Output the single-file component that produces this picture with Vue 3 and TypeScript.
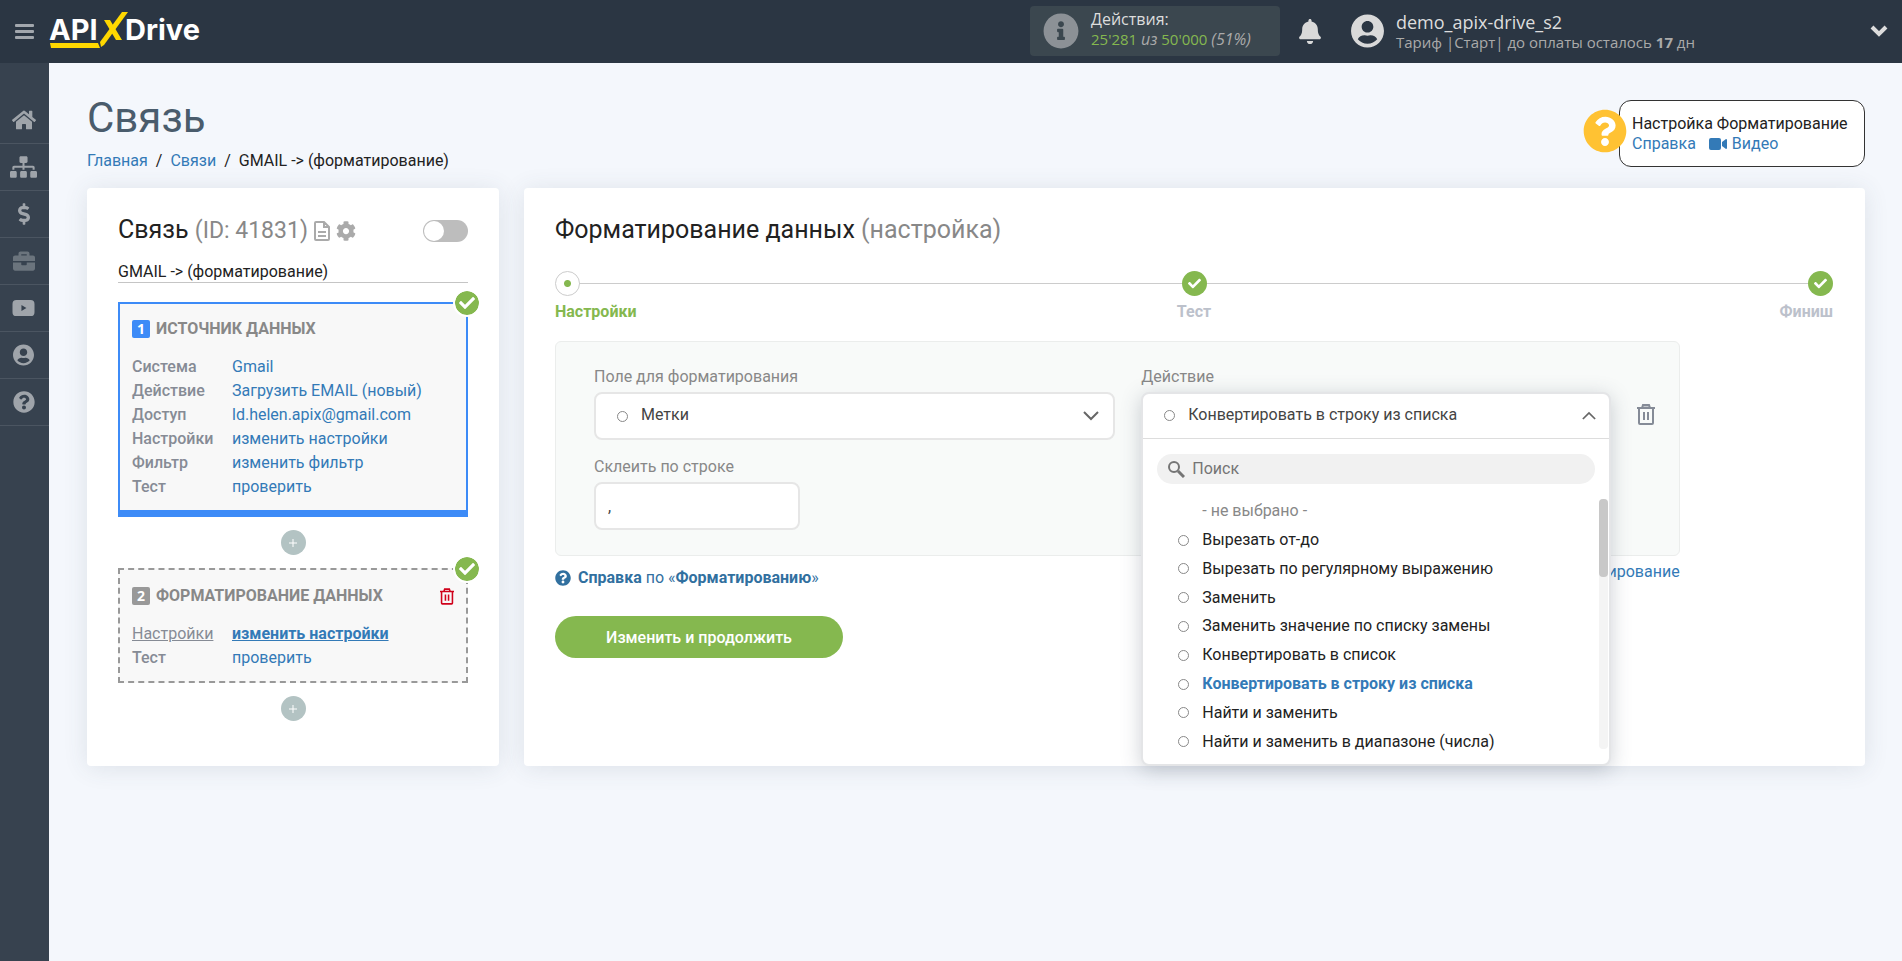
<script setup lang="ts">
import { ref } from 'vue'

interface Icon { w: number; h: number; d: string }
interface Row { label: string; value: string; current?: boolean }

const icons: Record<string, Icon> = {
  home: { w: 576, h: 512, d: 'M280.37 148.26L96 300.11V464a16 16 0 0 0 16 16l112.06-.29a16 16 0 0 0 15.92-16V368a16 16 0 0 1 16-16h64a16 16 0 0 1 16 16v95.64a16 16 0 0 0 16 16.05L464 480a16 16 0 0 0 16-16V300L295.67 148.26a12.19 12.19 0 0 0-15.3 0zM571.6 251.47L488 182.56V44.05a12 12 0 0 0-12-12h-56a12 12 0 0 0-12 12v72.61L318.47 43a48 48 0 0 0-61 0L4.34 251.47a12 12 0 0 0-1.6 16.9l25.5 31A12 12 0 0 0 45.15 301l235.22-193.74a12.19 12.19 0 0 1 15.3 0L530.9 301a12 12 0 0 0 16.9-1.6l25.5-31a12 12 0 0 0-1.7-16.93z' },
  sitemap: { w: 640, h: 512, d: 'M128 352H32c-17.67 0-32 14.33-32 32v96c0 17.67 14.33 32 32 32h96c17.67 0 32-14.33 32-32v-96c0-17.67-14.33-32-32-32zm-24-80h192v48h48v-48h192v48h48v-57.59c0-21.17-17.23-38.41-38.41-38.41H344v-64h40c17.67 0 32-14.33 32-32V32c0-17.67-14.33-32-32-32H256c-17.67 0-32 14.33-32 32v96c0 17.67 14.33 32 32 32h40v64H94.41C73.23 224 56 241.23 56 262.41V320h48v-48zm264 80h-96c-17.67 0-32 14.33-32 32v96c0 17.67 14.33 32 32 32h96c17.67 0 32-14.33 32-32v-96c0-17.67-14.33-32-32-32zm240 0h-96c-17.67 0-32 14.33-32 32v96c0 17.67 14.33 32 32 32h96c17.67 0 32-14.33 32-32v-96c0-17.67-14.33-32-32-32z' },
  dollar: { w: 288, h: 512, d: 'M209.2 233.4l-108-31.6C88.7 198.2 80 186.5 80 173.5c0-16.3 13.2-29.5 29.5-29.5h66.3c12.2 0 24.2 3.7 34.2 10.5 6.1 4.1 14.3 3.1 19.5-2l34.8-34c7.1-6.9 6.1-18.4-1.8-24.5C238 74.8 207.4 64.1 176 64V16c0-8.8-7.2-16-16-16h-32c-8.8 0-16 7.2-16 16v48h-2.5C45.8 64-5.4 118.7.5 183.6c4.2 46.1 39.4 83.6 83.8 96.6l102.5 30c12.5 3.7 21.2 15.3 21.2 28.3 0 16.3-13.2 29.5-29.5 29.5h-66.3C100 368 88 364.3 78 357.5c-6.1-4.1-14.3-3.1-19.5 2l-34.8 34c-7.1 6.9-6.1 18.4 1.8 24.5 24.5 19.2 55.1 29.9 86.5 30v48c0 8.8 7.2 16 16 16h32c8.8 0 16-7.2 16-16v-48.2c46.6-.9 90.3-28.6 105.7-72.7 21.5-61.6-14.6-124.8-72.5-141.7z' },
  briefcase: { w: 512, h: 512, d: 'M320 336c0 8.84-7.16 16-16 16h-96c-8.84 0-16-7.16-16-16v-48H0v144c0 25.6 22.4 48 48 48h416c25.6 0 48-22.4 48-48V288H320v48zm144-208h-80V80c0-25.6-22.4-48-48-48H176c-25.6 0-48 22.4-48 48v48H48c-25.6 0-48 22.4-48 48v80h512v-80c0-25.6-22.4-48-48-48zm-144 0H192V96h128v32z' },
  video: { w: 512, h: 512, d: 'M90 70h332q90 0 90 90v192q0 90-90 90H90q-90 0-90-90V160q0-90 90-90zM208 186v140l116-70z' },
  user: { w: 496, h: 512, d: 'M248 8C111 8 0 119 0 256s111 248 248 248 248-111 248-248S385 8 248 8zm0 96c48.6 0 88 39.4 88 88s-39.4 88-88 88-88-39.4-88-88 39.4-88 88-88zm0 344c-58.7 0-111.3-26.6-146.5-68.2 18.8-35.4 55.6-59.8 98.5-59.8 2.4 0 4.8.4 7.1 1.1 13 4.2 26.6 6.9 40.9 6.9 14.3 0 28-2.7 40.9-6.9 2.3-.7 4.7-1.1 7.1-1.1 42.9 0 79.7 24.4 98.5 59.8C359.3 421.4 306.7 448 248 448z' },
  question: { w: 512, h: 512, d: 'M504 256c0 136.997-111.043 248-248 248S8 392.997 8 256C8 119.083 119.043 8 256 8s248 111.083 248 248zM262.655 90c-54.497 0-89.255 22.957-116.549 63.758-3.536 5.286-2.353 12.415 2.715 16.258l34.699 26.31c5.205 3.947 12.621 3.008 16.665-2.122 17.864-22.658 30.113-35.797 57.303-35.797 20.429 0 45.698 13.148 45.698 32.958 0 14.976-12.363 22.667-32.534 33.976C247.128 238.528 216 254.941 216 296v4c0 6.627 5.373 12 12 12h56c6.627 0 12-5.373 12-12v-1.333c0-28.462 83.186-29.647 83.186-106.667 0-58.002-60.165-102-116.531-102zM256 338c-25.365 0-46 20.635-46 46 0 25.364 20.635 46 46 46s46-20.636 46-46c0-25.365-20.635-46-46-46z' },
  info: { w: 512, h: 512, d: 'M256 8C119.043 8 8 119.083 8 256c0 136.997 111.043 248 248 248s248-111.003 248-248C504 119.083 392.957 8 256 8zm0 110c23.196 0 42 18.804 42 42s-18.804 42-42 42-42-18.804-42-42 18.804-42 42-42zm56 254c0 6.627-5.373 12-12 12h-88c-6.627 0-12-5.373-12-12v-24c0-6.627 5.373-12 12-12h12v-64h-12c-6.627 0-12-5.373-12-12v-24c0-6.627 5.373-12 12-12h64c6.627 0 12 5.373 12 12v100h12c6.627 0 12 5.373 12 12v24z' },
  bell: { w: 448, h: 512, d: 'M224 512c35.32 0 63.97-28.65 63.97-64H160.03c0 35.35 28.65 64 63.97 64zm215.39-149.71c-19.32-20.76-55.47-51.99-55.47-154.29 0-77.7-54.48-139.9-127.94-155.16V32c0-17.67-14.32-32-31.98-32s-31.98 14.33-31.98 32v20.84C118.56 68.1 64.08 130.3 64.08 208c0 102.3-36.15 133.53-55.47 154.29-6 6.45-8.66 14.16-8.61 21.71.11 16.4 12.98 32 32.1 32h383.8c19.12 0 32-15.6 32.1-32 .05-7.55-2.61-15.27-8.61-21.71z' },
  cog: { w: 512, h: 512, d: 'M487.4 315.7l-42.6-24.6c4.3-23.2 4.3-47 0-70.2l42.6-24.6c4.9-2.8 7.1-8.6 5.5-14-11.1-35.6-30-67.8-54.7-94.6-3.8-4.1-10-5.1-14.8-2.3L380.8 110c-17.9-15.4-38.5-27.3-60.8-35.1V25.8c0-5.6-3.9-10.5-9.4-11.7-36.7-8.2-74.3-7.8-109.2 0-5.5 1.2-9.4 6.1-9.4 11.7V75c-22.2 7.9-42.8 19.8-60.8 35.1L88.7 85.5c-4.9-2.8-11-1.9-14.8 2.3-24.7 26.7-43.6 58.9-54.7 94.6-1.7 5.4.6 11.2 5.5 14L67.3 221c-4.3 23.2-4.3 47 0 70.2l-42.6 24.6c-4.9 2.8-7.1 8.6-5.5 14 11.1 35.6 30 67.8 54.7 94.6 3.8 4.1 10 5.1 14.8 2.3l42.6-24.6c17.9 15.4 38.5 27.3 60.8 35.1v49.2c0 5.6 3.9 10.5 9.4 11.7 36.7 8.2 74.3 7.8 109.2 0 5.5-1.2 9.4-6.1 9.4-11.7v-49.2c22.2-7.9 42.8-19.8 60.8-35.1l42.6 24.6c4.9 2.8 11 1.9 14.8-2.3 24.7-26.7 43.6-58.9 54.7-94.6 1.5-5.5-.7-11.3-5.6-14.1zM256 336c-44.1 0-80-35.9-80-80s35.9-80 80-80 80 35.9 80 80-35.9 80-80 80z' },
  check: { w: 512, h: 512, d: 'M173.898 439.404l-166.4-166.4c-9.997-9.997-9.997-26.206 0-36.204l36.203-36.204c9.997-9.998 26.207-9.998 36.204 0L192 312.69 432.095 72.596c9.997-9.997 26.207-9.997 36.204 0l36.203 36.204c9.997 9.997 9.997 26.206 0 36.204l-294.4 294.401c-9.998 9.997-26.207 9.997-36.204-.001z' },
}

const nav = [
  { icon: 'home', label: 'Главная', size: 24 },
  { icon: 'sitemap', label: 'Связи', size: 27 },
  { icon: 'dollar', label: 'Оплата', size: 12 },
  { icon: 'briefcase', label: 'Проекты', size: 22 },
  { icon: 'video', label: 'Видео', size: 23 },
  { icon: 'user', label: 'Профиль', size: 21 },
  { icon: 'question', label: 'Помощь', size: 22 },
]

const sourceRows: Row[] = [
  { label: 'Система', value: 'Gmail' },
  { label: 'Действие', value: 'Загрузить EMAIL (новый)' },
  { label: 'Доступ', value: 'ld.helen.apix@gmail.com' },
  { label: 'Настройки', value: 'изменить настройки' },
  { label: 'Фильтр', value: 'изменить фильтр' },
  { label: 'Тест', value: 'проверить' },
]
const formatRows: Row[] = [
  { label: 'Настройки', value: 'изменить настройки', current: true },
  { label: 'Тест', value: 'проверить' },
]

const actions = [
  'Вырезать от-до',
  'Вырезать по регулярному выражению',
  'Заменить',
  'Заменить значение по списку замены',
  'Конвертировать в список',
  'Конвертировать в строку из списка',
  'Найти и заменить',
  'Найти и заменить в диапазоне (числа)',
]

const enabled = ref(false)
const linkName = ref('GMAIL -> (форматирование)')
const field = ref('Метки')
const glue = ref(',')
const search = ref('')
const open = ref(true)
const action = ref('Конвертировать в строку из списка')
</script>

<template>
  <div class="page">
    <header class="topbar">
      <button class="burger" aria-label="Меню"><i></i><i></i><i></i></button>
      <a class="logo" href="#" aria-label="APIXDrive">
        <svg width="160" height="38" viewBox="0 0 160 38">
          <text x="0" y="28" class="logo-text">API</text>
          <text x="76" y="28" class="logo-text">Drive</text>
          <path d="M1 31h48l2 5H2z" fill="#ffd800" />
          <path d="M73 0h6L55 33l-3 2-1-5z" fill="#ffd800" />
          <path d="M55 8h6l12 20h-6z" fill="#ffd800" />
        </svg>
      </a>
      <a class="quota" href="#">
        <svg class="quota-icon" width="36" height="36" viewBox="0 0 512 512"><path :d="icons.info.d" /></svg>
        <span class="quota-text">
          <span class="quota-title">Действия:</span>
          <span class="quota-value"><b>25'281</b> <i>из</i> <b>50'000</b> <i>(51%)</i></span>
        </span>
      </a>
      <button class="bell" aria-label="Уведомления">
        <svg width="22" height="25" viewBox="0 0 448 512"><path :d="icons.bell.d" /></svg>
      </button>
      <button class="account">
        <svg class="avatar" width="33" height="34" viewBox="0 0 496 512"><path :d="icons.user.d" /></svg>
        <span class="account-text">
          <span class="account-name">demo_apix-drive_s2</span>
          <span class="account-plan">Тариф |Старт| до оплаты осталось <strong>17</strong> дн</span>
        </span>
        <svg class="caret" width="18" height="12" viewBox="0 0 18 12"><path d="M2 2l7 7 7-7" /></svg>
      </button>
    </header>

    <div class="body">
      <nav class="sidebar">
        <a v-for="n in nav" :key="n.icon" href="#" class="nav-item" :class="{ dim: n.icon === 'briefcase' }" :aria-label="n.label">
          <svg :width="n.size" height="22" :viewBox="`0 0 ${icons[n.icon].w} ${icons[n.icon].h}`"><path fill-rule="evenodd" :d="icons[n.icon].d" /></svg>
        </a>
      </nav>

      <main class="main">
        <div class="head">
          <div>
            <h1>Связь</h1>
            <nav class="crumbs">
              <a href="#">Главная</a><span>/</span><a href="#">Связи</a><span>/</span><em>GMAIL -&gt; (форматирование)</em>
            </nav>
          </div>
          <aside class="help">
            <svg class="help-icon" width="44" height="44" viewBox="0 0 512 512"><circle cx="256" cy="256" r="200" fill="#fff" /><path :d="icons.question.d" /></svg>
            <div>Настройка Форматирование</div>
            <div class="help-links">
              <a href="#">Справка</a>
              <a href="#" class="video-link"><svg width="18" height="12" viewBox="0 0 18 12"><path d="M2 0h8q2 0 2 2v8q0 2-2 2H2q-2 0-2-2V2q0-2 2-2zM13 4l4-3q1 0 1 1v8q0 1-1 1l-4-3z" /></svg>Видео</a>
            </div>
          </aside>
        </div>

        <div class="cards">
          <section class="card left">
            <div class="link-head">
              <h2>Связь <span class="link-id">(ID: 41831)</span></h2>
              <button class="icon-btn" aria-label="Описание">
                <svg width="16" height="20" viewBox="0 0 16 20" fill="none" stroke="#aaa" stroke-width="2"><path d="M2 1h8l5 5v12q0 1-1 1H2q-1 0-1-1V2q0-1 1-1zM10 1v5h5M4 11h8M4 15h8" /></svg>
              </button>
              <button class="icon-btn" aria-label="Параметры">
                <svg width="20" height="20" viewBox="0 0 512 512" fill="#aaa"><path :d="icons.cog.d" /></svg>
              </button>
              <input v-model="enabled" class="toggle" type="checkbox" role="switch" aria-label="Включить связь">
            </div>
            <input v-model="linkName" class="link-name" type="text" aria-label="Название связи">

            <div class="block source">
              <span class="badge-ok"><svg width="16" height="16" viewBox="0 0 512 512"><path :d="icons.check.d" /></svg></span>
              <h3><b class="num">1</b>ИСТОЧНИК ДАННЫХ</h3>
              <dl>
                <template v-for="r in sourceRows" :key="r.label">
                  <dt>{{ r.label }}</dt><dd><a href="#">{{ r.value }}</a></dd>
                </template>
              </dl>
            </div>
            <button class="plus" aria-label="Добавить блок"><svg width="8" height="8" viewBox="0 0 8 8"><path d="M0 4h8M4 0v8" stroke="#fff" /></svg></button>
            <div class="block format">
              <span class="badge-ok"><svg width="16" height="16" viewBox="0 0 512 512"><path :d="icons.check.d" /></svg></span>
              <h3>
                <b class="num">2</b>ФОРМАТИРОВАНИЕ ДАННЫХ
                <button class="trash-red" aria-label="Удалить блок">
                  <svg width="14" height="17" viewBox="0 0 18 21" fill="none" stroke="#d0021b" stroke-width="2"><path d="M0 4h18M5 4l1-3h6l1 3M2 4v15q0 1 1 1h12q1 0 1-1V4M7 8v8M11 8v8" /></svg>
                </button>
              </h3>
              <dl>
                <template v-for="r in formatRows" :key="r.label">
                  <dt :class="{ current: r.current }">{{ r.label }}</dt><dd :class="{ current: r.current }"><a href="#">{{ r.value }}</a></dd>
                </template>
              </dl>
            </div>
            <button class="plus" aria-label="Добавить блок"><svg width="8" height="8" viewBox="0 0 8 8"><path d="M0 4h8M4 0v8" stroke="#fff" /></svg></button>
          </section>

          <section class="card right">
            <h2>Форматирование данных <span>(настройка)</span></h2>
            <ol class="steps">
              <li class="active"><span class="dot"></span>Настройки</li>
              <li><span class="dot done"><svg width="13" height="13" viewBox="0 0 512 512"><path :d="icons.check.d" /></svg></span>Тест</li>
              <li><span class="dot done"><svg width="13" height="13" viewBox="0 0 512 512"><path :d="icons.check.d" /></svg></span>Финиш</li>
            </ol>

            <div class="form-wrap">
              <div class="form">
                <div class="field">
                  <label for="field">Поле для форматирования</label>
                  <div class="select-box">
                    <i class="ring"></i>
                    <select id="field" v-model="field"><option>Метки</option></select>
                    <svg class="arrow" width="16" height="10" viewBox="0 0 16 10"><path d="M1 1l7 7 7-7" /></svg>
                  </div>
                </div>
                <div class="field">
                  <label id="action-label" for="action">Действие</label>
                  <div class="combo">
                    <div class="panel" :class="{ open }">
                      <button id="action" class="combo-head" aria-haspopup="listbox" :aria-expanded="open" @click="open = !open">
                        <i class="ring"></i><span>{{ action }}</span>
                        <svg class="arrow" width="14" height="9" viewBox="0 0 16 10"><path d="M1 9l7-7 7 7" /></svg>
                      </button>
                      <div v-if="open" class="menu">
                        <div class="search">
                          <svg width="18" height="18" viewBox="0 0 18 18" fill="none" stroke="#757575" stroke-width="2"><circle cx="7" cy="7" r="5" /><path d="M11 11l6 6" stroke-width="3" /></svg>
                          <input v-model="search" type="search" placeholder="Поиск" aria-label="Поиск">
                        </div>
                        <div class="list-area">
                          <div class="options" role="radiogroup" aria-labelledby="action-label">
                            <label class="option none"><span class="ring-gap"></span>- не выбрано -</label>
                            <label v-for="a in actions" :key="a" class="option" :class="{ selected: a === action }">
                              <input v-model="action" type="radio" name="action" :value="a" class="ring">{{ a }}
                            </label>
                          </div>
                          <div class="track"><div class="thumb"></div></div>
                        </div>
                      </div>
                    </div>
                  </div>
                </div>
                <button class="trash" aria-label="Удалить">
                  <svg width="18" height="21" viewBox="0 0 18 21" fill="none" stroke="#858b97" stroke-width="2"><path d="M5 4l1-3h6l1 3z" fill="#c5c9ce" /><path d="M0 4h18M2 4v15q0 1 1 1h12q1 0 1-1V4M7 8v8M11 8v8" /></svg>
                </button>
                <div class="field glue">
                  <label for="glue">Склеить по строке</label>
                  <input id="glue" v-model="glue" type="text">
                </div>
              </div>
              <div class="form-links">
                <a href="#" class="ref-link"><svg width="16" height="16" viewBox="0 0 512 512"><path :d="icons.question.d" /></svg><span><b>Справка</b> по «<b>Форматированию</b>»</span></a>
                <a href="#" class="add-link">Добавить форматирование</a>
              </div>
            </div>
            <button class="submit">Изменить и продолжить</button>
          </section>
        </div>
      </main>
    </div>
  </div>
</template>

<style>
body { margin: 0; background: #f4f7fc; }
</style>

<style scoped>
* { box-sizing: border-box; }
.page { min-height: 100vh; display: flex; flex-direction: column; background: #f4f7fc; font: 16px/24px Roboto, "Liberation Sans", sans-serif; color: #222; }
button, input, select { font: inherit; }
button { border: 0; background: none; padding: 0; cursor: pointer; color: inherit; }
a { color: #337ab7; text-decoration: none; }
svg { flex: none; display: block; }

.topbar { height: 63px; flex: none; padding: 0 14px 1px 0; display: flex; align-items: center; background: #2b3643; font-family: "Open Sans", "Noto Sans", sans-serif; color: #ddd; }
.burger { width: 49px; display: flex; flex-direction: column; align-items: center; gap: 3px; }
.burger i { width: 19px; height: 3px; border-radius: 1px; background: #a2a7ad; }
.logo { margin-right: auto; }
.logo-text { font: 700 29px Inter, sans-serif; fill: #fff; }
.quota { width: 250px; height: 50px; padding: 0 13px; display: flex; align-items: center; gap: 12px; border-radius: 4px; background: #3b474f; color: #ddd; }
.quota-icon { fill: #8c9196; }
.quota-text { display: flex; flex-direction: column; padding-bottom: 4px; white-space: nowrap; line-height: 20px; }
.quota-title { font-size: 16px; }
.quota-value { font-size: 15px; color: #aaa; }
.quota-value b { font-weight: 400; color: #85b84f; }
.quota-value i { font-size: 16px; }
.bell { width: 22px; margin: 0 30px 0 19px; }
.bell svg, .avatar { fill: #d9d9d9; }
.account { width: 537px; display: flex; align-items: center; gap: 12px; text-align: left; }
.account-text { display: flex; flex-direction: column; white-space: nowrap; }
.account-name { font-size: 18px; line-height: 22px; color: #ddd; }
.account-plan { font-size: 15px; line-height: 18px; color: #aaa; }
.caret { margin-left: auto; fill: none; stroke: #ddd; stroke-width: 4; }

.body { flex: 1; display: flex; }
.sidebar { width: 49px; flex: none; padding-top: 34px; background: #37424f; }
.nav-item { height: 47px; padding-right: 2px; display: flex; align-items: center; justify-content: center; border-bottom: 1px solid #4b5561; }
.nav-item svg { fill: #9fa4aa; }
.nav-item.dim svg { fill: #6b747d; }
.main { flex: 1; min-width: 0; padding: 37px 37px 0 38px; }

.head { height: 88px; display: flex; justify-content: space-between; }
h1 { margin: 0; font-size: 42px; line-height: 36px; font-weight: 400; color: #4a5c6c; }
.crumbs { margin-top: 13px; display: flex; gap: 8px; white-space: nowrap; }
.crumbs em { font-style: normal; }
.help { position: relative; width: 246px; height: 67px; padding: 13px 0 0 12px; border: 1px solid #333; border-radius: 12px; background: #fff; line-height: 20px; white-space: nowrap; }
.help-icon { position: absolute; left: -37px; top: 8px; fill: #ffc233; }
.help-links { display: flex; gap: 13px; }
.video-link { display: flex; align-items: center; gap: 5px; }
.video-link svg { fill: #337ab7; }

.cards { display: flex; align-items: stretch; gap: 25px; }
.card { border-radius: 4px; background: #fff; box-shadow: 0 2px 24px rgba(60, 70, 90, .12); }
.left { width: 412px; flex: none; padding: 24px 31px 32px; }
.right { flex: 1; min-width: 0; padding: 24px 32px 24px 31px; }
h2 { margin: 0; font-size: 25px; line-height: 36px; font-weight: 400; white-space: nowrap; }
h2 span { color: #888; }
.link-id { font-size: 23px; }
.link-head { display: flex; align-items: center; gap: 6px; }
.toggle { appearance: none; width: 45px; height: 22px; margin: 0 0 0 auto; border-radius: 11px; background: #bdbdbd; display: flex; align-items: center; padding: 1px; }
.toggle::before { content: ""; width: 20px; height: 20px; border-radius: 50%; background: #fff; }
.link-name { width: 100%; height: 24px; margin: 10px 0 0; padding: 2px 0 0; border: 0; border-bottom: 1px solid #c5c5c5; display: block; color: #222; outline: 0; }
.block { position: relative; padding: 15px 12px 11px; background: #f8f8f8; border: 2px solid #3d8bf7; }
.source { margin-top: 19px; border-bottom-width: 7px; }
.format { border: 2px dashed #999; padding-top: 16px; }
.badge-ok { position: absolute; right: -15px; top: -15px; width: 28px; height: 28px; display: flex; align-items: center; justify-content: center; border-radius: 50%; border: 2px solid #fff; background: #85b84f; background-clip: padding-box; }
.badge-ok svg, .dot svg { fill: #fff; }
h3 { margin: 0 0 16px; display: flex; align-items: center; font-size: 16px; line-height: 20px; font-weight: 700; color: #888; white-space: nowrap; }
.num { width: 18px; height: 18px; margin-right: 6px; border-radius: 2px; background: #3d8bf7; color: #fff; text-align: center; font: 700 14px/18px "Open Sans", sans-serif; }
.format .num { background: #999; }
.trash-red { margin-left: auto; }
dl { margin: 0; display: grid; grid-template-columns: 100px 1fr; line-height: 24px; white-space: nowrap; }
dt { font-weight: 500; color: #868b95; }
dd { margin: 0; }
dt.current { font-weight: 400; text-decoration: underline; }
dd.current a { font-weight: 700; text-decoration: underline; }
.plus { width: 25px; height: 25px; margin: 13px auto; display: flex; align-items: center; justify-content: center; border-radius: 50%; background: #b3c3c3; }

.steps { position: relative; margin: 23px 0 0; padding: 0; display: flex; justify-content: space-between; list-style: none; font-weight: 700; color: #bcc1cb; line-height: 20px; }
.steps::before { content: ""; position: absolute; left: 12px; right: 12px; top: 12px; height: 1px; background: #ccc; }
.steps li { position: relative; flex: 1; display: flex; flex-direction: column; gap: 6px; align-items: center; }
.steps li:first-child { align-items: flex-start; }
.steps li:last-child { align-items: flex-end; }
.steps .active { color: #85b84f; }
.dot { width: 25px; height: 25px; display: flex; align-items: center; justify-content: center; border-radius: 50%; border: 1px solid #ccc; background: radial-gradient(circle, #85b84f 3px, #fff 4px); }
.dot.done { border: 0; background: #85b84f; }

.form-wrap { width: 88%; margin-top: 19px; }
.form { min-height: 215px; padding: 25px 24px 24px 38px; display: grid; grid-template-columns: 522fr 470fr auto; column-gap: 26px; row-gap: 16px; border: 1px solid #ebedec; border-radius: 6px; background: #f8faf9; }
.field { display: flex; flex-direction: column; min-width: 0; }
.field > label { line-height: 20px; padding-bottom: 5px; color: #888; }
.select-box { position: relative; height: 48px; border: 2px solid #e6e6e6; border-radius: 8px; background: #fff; display: flex; align-items: center; padding: 0 14px 0 21px; }
.ring { appearance: none; width: 11px; height: 11px; margin: 0; flex: none; border: 1px solid #888; border-radius: 50%; background: #fff; }
.select-box select { flex: 1; height: 100%; border: 0; appearance: none; background: none; padding: 0 0 2px 13px; color: #444; outline: 0; }
.arrow { fill: none; stroke: #666; stroke-width: 2; }
.combo { position: relative; height: 48px; }
.panel { position: absolute; z-index: 2; inset: 0 0 auto; border: 2px solid #e4e5e7; border-radius: 8px; background: #fff; }
.panel.open { box-shadow: 0 4px 20px rgba(60, 70, 90, .25); }
.combo-head { width: 100%; height: 44px; padding: 0 13px 2px 21px; display: flex; align-items: center; color: #444; }
.combo-head span { padding-left: 13px; white-space: nowrap; }
.combo-head .arrow { margin-left: auto; }
.menu { border-top: 1px solid #ddd; padding-top: 15px; }
.search { height: 30px; margin: 0 14px; padding: 0 10px; display: flex; align-items: center; gap: 7px; border-radius: 15px; background: #f1f1f1; }
.search input { flex: 1; min-width: 0; border: 0; padding: 0; background: none; outline: 0; }
.search input::placeholder { color: #757575; opacity: 1; }
.list-area { display: flex; height: 280px; padding-top: 13px; }
.options { flex: 1; height: 259px; display: grid; grid-auto-rows: 1fr; }
.option { display: flex; align-items: center; gap: 13px; padding-left: 35px; white-space: nowrap; }
.ring-gap { width: 11px; height: 11px; }
.option.none { color: #888; }
.option.selected { color: #337ab7; font-weight: 700; }
.track { width: 9px; height: 250px; margin: 2px 1px 0 0; border-radius: 4px; background: #f4f4f4; }
.thumb { height: 78px; border-radius: 4px; background: #c8c8c8; }
.trash { width: 18px; align-self: start; margin-top: 37px; }
.glue { grid-column: 1; width: 206px; }
.glue input { height: 48px; border: 2px solid #e6e6e6; border-radius: 8px; background: #fff; padding: 0 12px; color: #444; outline: 0; }
.form-links { padding-top: 4px; display: flex; justify-content: space-between; align-items: flex-start; white-space: nowrap; }
.ref-link { display: flex; align-items: center; gap: 7px; margin-top: 6px; color: #31709f; }
.ref-link svg { fill: #31709f; }
.ref-link b { font-weight: 700; }
.submit { width: 288px; height: 42px; margin-top: 26px; padding-top: 1px; border-radius: 21px; background: #85b84f; color: #fff; font-weight: 500; }
</style>
